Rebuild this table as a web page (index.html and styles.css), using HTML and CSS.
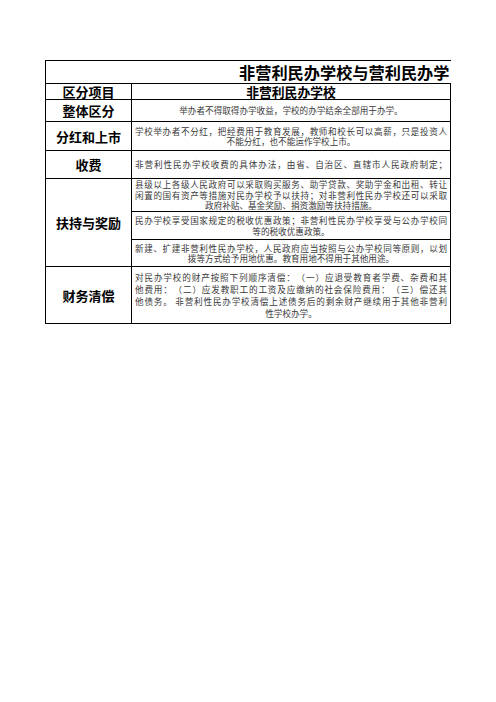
FILE: index.html
```html
<!DOCTYPE html>
<html lang="zh-CN">
<head>
<meta charset="utf-8">
<title>非营利民办学校与营利民办学校的区别</title>
<link rel="stylesheet" href="styles.css">
</head>
<body>
<table class="sheet">
  <colgroup>
    <col class="col-label">
    <col class="col-desc">
  </colgroup>
  <tr class="r-title">
    <td class="title" colspan="2"><div class="title-text">非营利民办学校与营利民办学</div></td>
  </tr>
  <tr class="r-head">
    <td class="label">区分项目</td>
    <td class="head">非营利民办学校</td>
  </tr>
  <tr class="r-whole">
    <td class="label">整体区分</td>
    <td class="desc"><span class="ln last">举办者不得取得办学收益，学校的办学结余全部用于办学。</span></td>
  </tr>
  <tr class="r-div">
    <td class="label">分红和上市</td>
    <td class="desc"><span class="ln">学校举办者不分红，把经费用于教育发展，教师和校长可以高薪，只是投资人</span><span class="ln last">不能分红，也不能运作学校上市。</span></td>
  </tr>
  <tr class="r-fee">
    <td class="label">收费</td>
    <td class="desc"><span class="ln">非营利性民办学校收费的具体办法，由省、自治区、直辖市人民政府制定；</span></td>
  </tr>
  <tr class="r-sup1">
    <td class="label" rowspan="3">扶持与奖励</td>
    <td class="desc"><span class="ln">县级以上各级人民政府可以采取购买服务、助学贷款、奖助学金和出租、转让</span><span class="ln">闲置的国有资产等措施对民办学校予以扶持；对非营利性民办学校还可以采取</span><span class="ln last">政府补贴、基金奖励、捐资激励等扶持措施。</span></td>
  </tr>
  <tr class="r-sup2">
    <td class="desc"><span class="ln">民办学校享受国家规定的税收优惠政策；非营利性民办学校享受与公办学校同</span><span class="ln last">等的税收优惠政策。</span></td>
  </tr>
  <tr class="r-sup3">
    <td class="desc"><span class="ln">新建、扩建非营利性民办学校，人民政府应当按照与公办学校同等原则，以划</span><span class="ln last">拨等方式给予用地优惠。教育用地不得用于其他用途。</span></td>
  </tr>
  <tr class="r-fin">
    <td class="label">财务清偿</td>
    <td class="desc fin"><span class="ln">对民办学校的财产按照下列顺序清偿：　（一）应退受教育者学费、杂费和其</span><span class="ln">他费用：　（二）应发教职工的工资及应缴纳的社会保险费用：　（三）偿还其</span><span class="ln">他债务。 非营利性民办学校清偿上述债务后的剩余财产继续用于其他非营利</span><span class="ln last">性学校办学。</span></td>
  </tr>
</table>
</body>
</html>
```
FILE: styles.css
```css
html, body {
  margin: 0;
  padding: 0;
  background: #fff;
}

body {
  font-family: "Noto Sans CJK SC", "Noto Sans", sans-serif;
  color: #000;
}

.sheet {
  border-collapse: collapse;
  table-layout: fixed;
  width: 405px;
  margin: 60px 0 0 45px;
}

.col-label { width: 86px; }
.col-desc { width: 319px; }

.sheet td {
  border: 1px solid #000;
  padding: 0;
  vertical-align: middle;
}

.sheet td.title {
  border-right: none;
  padding: 0 1px 1px 0;
}

.title-text {
  white-space: nowrap;
  text-align: right;
  font-size: 16.2px;
  font-weight: 700;
  line-height: 20px;
}

.label {
  text-align: center;
  font-size: 13px;
  font-weight: 700;
  line-height: 15px;
}

.head {
  text-align: center;
  font-size: 12.8px;
  font-weight: 700;
  line-height: 15px;
}

.sheet td.desc {
  padding: 0 3px;
  font-size: 8.6px;
  line-height: 10.5px;
  color: #3a3a3a;
}

.sheet td.fin {
  line-height: 12px;
}

.ln {
  display: block;
  text-align: justify;
  text-align-last: justify;
  white-space: nowrap;
}

.ln.last {
  text-align: center;
  text-align-last: center;
}

.r-title td { height: 21px; }
.r-head td { height: 15px; }
.r-whole td { height: 21px; }
.r-div td { height: 28px; }
.r-fee td { height: 27px; }
.r-sup1 td.desc { height: 32px; }
.r-sup2 td { height: 27px; }
.r-sup3 td { height: 26px; }
.r-fin td { height: 56px; }
```
